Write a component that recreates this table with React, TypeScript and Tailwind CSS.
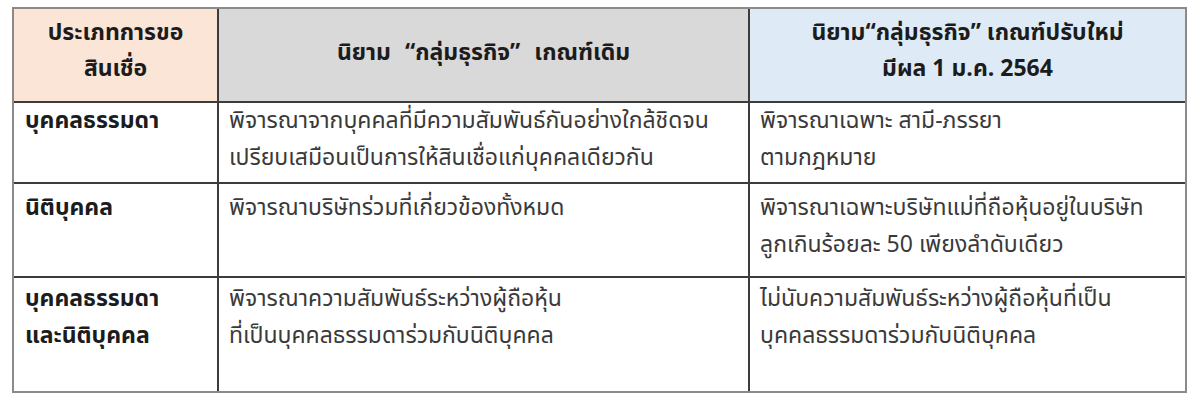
import * as React from 'react';

const FONT = '[font-family:Tahoma,"Noto_Sans_Thai","Noto_Sans",sans-serif]';

const ROWS = [
    {
        label: ['บุคคลธรรมดา'],
        before: ['พิจารณาจากบุคคลที่มีความสัมพันธ์กันอย่างใกล้ชิดจน', 'เปรียบเสมือนเป็นการให้สินเชื่อแก่บุคคลเดียวกัน'],
        after: ['พิจารณาเฉพาะ สามี-ภรรยา', 'ตามกฎหมาย'],
        height: 'h-[81px]',
        pad: 'pt-0',
    },
    {
        label: ['นิติบุคคล'],
        before: ['พิจารณาบริษัทร่วมที่เกี่ยวข้องทั้งหมด'],
        after: ['พิจารณาเฉพาะบริษัทแม่ที่ถือหุ้นอยู่ในบริษัท', 'ลูกเกินร้อยละ 50 เพียงลำดับเดียว'],
        height: 'h-[94px]',
        pad: 'pt-[6px]',
    },
    {
        label: ['บุคคลธรรมดา', 'และนิติบุคคล'],
        before: ['พิจารณาความสัมพันธ์ระหว่างผู้ถือหุ้น', 'ที่เป็นบุคคลธรรมดาร่วมกับนิติบุคคล'],
        after: ['ไม่นับความสัมพันธ์ระหว่างผู้ถือหุ้นที่เป็น', 'บุคคลธรรมดาร่วมกับนิติบุคคล'],
        height: 'h-[113px]',
        pad: 'pt-[3px]',
    },
];

function Lines({ lines }: { lines: string[] }) {
    return (
        <>
            {lines.map((l) => (
                <div key={l} className="whitespace-nowrap">
                    {l}
                </div>
            ))}
        </>
    );
}

export default function App() {
    return (
        <div className={`w-[1200px] h-[405px] bg-white pt-[7px] pl-[12px] ${FONT}`}>
            <div className="w-[1175px] border-2 border-[#8a8a8a]">
                <div className="grid grid-cols-[205px_531px_435px] h-[94px] text-[23px] leading-[36px] font-bold text-[#1c1c1c] border-b-2 border-[#3c3c3c]">
                    <div className="bg-[#fbe5d6] border-r-2 border-[#3c3c3c] flex flex-col items-center justify-center pb-[9px]">
                        <div>ประเภทการขอ</div>
                        <div>สินเชื่อ</div>
                    </div>
                    <div className="bg-[#d9d9d9] border-r-2 border-[#3c3c3c] flex items-center justify-center pb-[5px] [word-spacing:8px]">
                        นิยาม “กลุ่มธุรกิจ” เกณฑ์เดิม
                    </div>
                    <div className="bg-[#deebf7] flex flex-col items-center justify-center pb-[9px]">
                        <div>นิยาม“กลุ่มธุรกิจ” เกณฑ์ปรับใหม่</div>
                        <div>มีผล 1 ม.ค. 2564</div>
                    </div>
                </div>
                {ROWS.map((r, i) => (
                    <div
                        key={i}
                        className={`grid grid-cols-[205px_531px_435px] ${r.height} text-[23px] leading-[37px] ${
                            i < ROWS.length - 1 ? 'border-b-2 border-[#3c3c3c]' : ''
                        }`}
                    >
                        <div className={`border-r-2 border-[#3c3c3c] pl-[11px] font-bold text-[#1c1c1c] ${r.pad}`}>
                            <Lines lines={r.label} />
                        </div>
                        <div className={`border-r-2 border-[#3c3c3c] pl-[10px] text-[#3a3a3a] ${r.pad}`}>
                            <Lines lines={r.before} />
                        </div>
                        <div className={`pl-[10px] text-[#3a3a3a] ${r.pad}`}>
                            <Lines lines={r.after} />
                        </div>
                    </div>
                ))}
            </div>
        </div>
    );
}
